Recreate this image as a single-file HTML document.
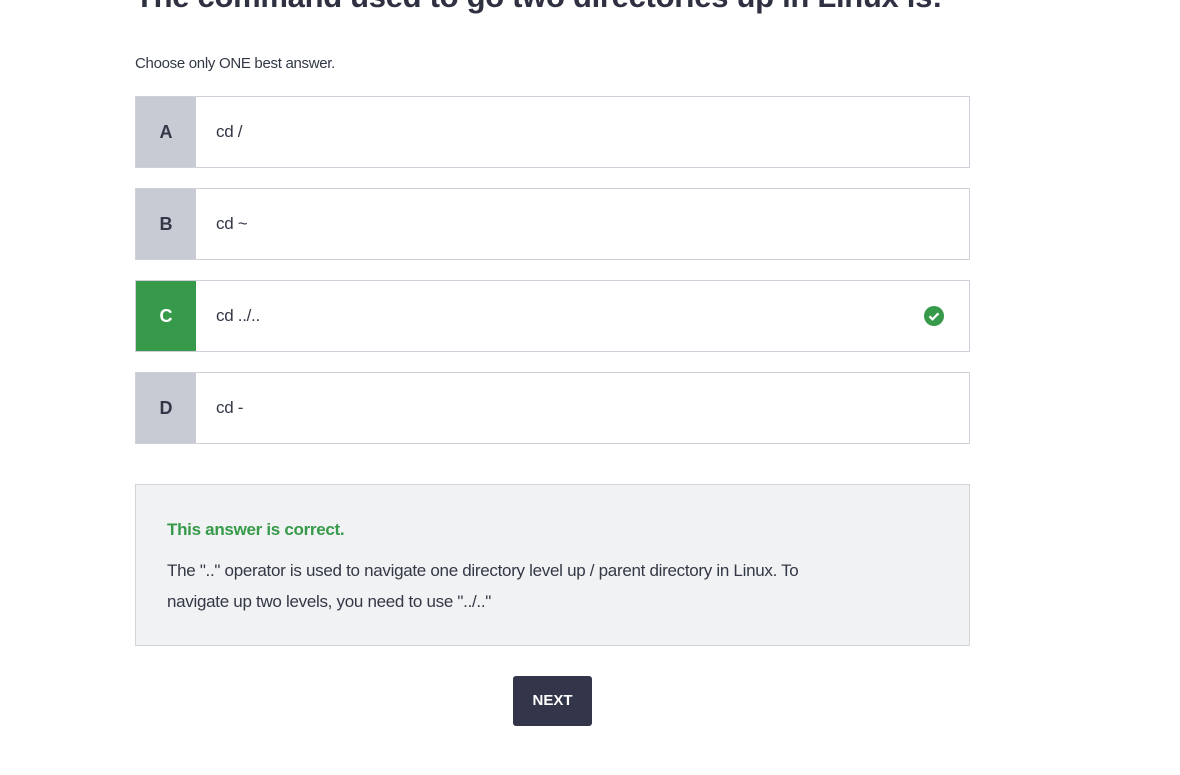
<!DOCTYPE html>
<html><head><style>
body{margin:0;background:#fff;font-family:"Liberation Sans",sans-serif;color:#333846;width:1180px;height:775px;overflow:hidden;position:relative}
h1{position:absolute;left:135px;top:-21px;margin:0;font-size:31px;font-weight:bold;white-space:nowrap;color:#2f3142;letter-spacing:-0.3px}
.sub{position:absolute;left:135px;top:55px;font-size:15px;letter-spacing:-0.3px}
.opt{position:absolute;left:135px;width:833px;height:70px;border:1px solid #cfd0da;background:#fff;box-sizing:content-box}
.opt .l{position:absolute;left:0;top:0;width:60px;height:70px;background:#c9cbd4;font-weight:bold;font-size:18px;line-height:70px;text-align:center;color:#343747}
.opt .t{position:absolute;left:80px;top:0;line-height:70px;font-size:17px;letter-spacing:-0.3px}
.fb{position:absolute;left:135px;top:484px;width:833px;height:160px;background:#f1f2f3;border:1px solid #d3d4d8}
.fb .h{position:absolute;left:31px;top:35px;color:#369a4a;font-weight:bold;font-size:17px;letter-spacing:-0.3px}
.fb .p{position:absolute;left:31px;top:70px;width:780px;font-size:17px;line-height:31px;letter-spacing:-0.3px;white-space:nowrap}
.btn{position:absolute;left:513px;top:676px;width:79px;height:50px;background:#33354a;border-radius:3px;color:#fff;font-weight:bold;font-size:15px;text-align:center;line-height:50px}
</style></head><body>
<h1>The command used to go two directories up in Linux is:</h1>
<div class="sub">Choose only ONE best answer.</div>
<div class="opt" style="top:96px"><div class="l">A</div><div class="t">cd /</div></div>
<div class="opt" style="top:188px"><div class="l">B</div><div class="t">cd ~</div></div>
<div class="opt" style="top:280px"><div class="l" style="background:#369a4a;color:#fff">C</div><div class="t">cd ../..</div>
<svg style="position:absolute;left:788px;top:25px" width="20" height="20" viewBox="0 0 20 20"><circle cx="10" cy="10" r="10" fill="#369a4a"/><path d="M5.5 10.3l3 3 6-6" stroke="#fff" stroke-width="2.2" fill="none"/></svg></div>
<div class="opt" style="top:372px"><div class="l">D</div><div class="t">cd -</div></div>
<div class="fb"><div class="h">This answer is correct.</div><div class="p">The ".." operator is used to navigate one directory level up / parent directory in Linux. To<br>navigate up two levels, you need to use "../.."</div></div>
<div class="btn">NEXT</div>
</body></html>
